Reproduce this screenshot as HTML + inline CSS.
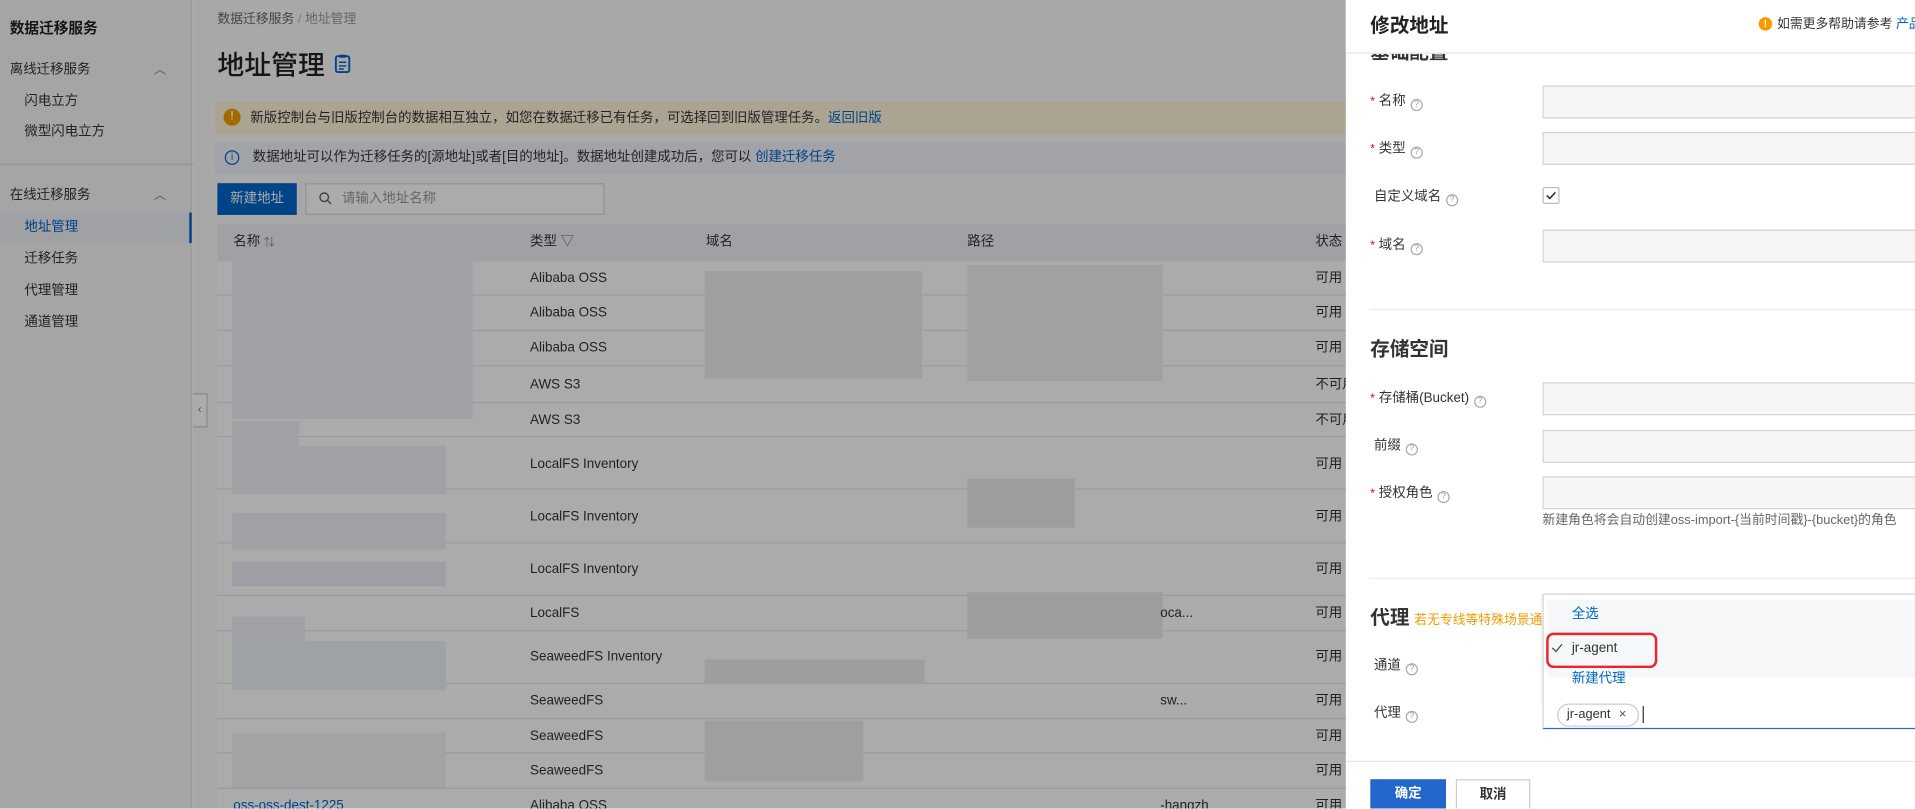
<!DOCTYPE html>
<html><head><meta charset="utf-8"><style>
*{box-sizing:border-box;margin:0;padding:0}
html,body{width:1915px;height:809px;overflow:hidden;background:#fff}
body{font-family:"Liberation Sans","Noto Sans CJK SC",sans-serif;color:#333}
#s{position:absolute;left:0;top:0;width:1568px;height:662px;transform:scale(1.2213);transform-origin:0 0;overflow:hidden}
.a{position:absolute;white-space:nowrap;line-height:14px}
.side{left:0;top:0;width:157px;height:662px;background:#f7f7f8;border-right:1px solid #e3e3e3}
.main{left:158px;top:0;width:1000px;height:662px;background:#fbfbfb}
.row{position:absolute;left:178px;width:940px;border-bottom:1px solid #e6e6e6;background:#fff}
.t{font-size:11px;color:#333}
.bl{background:#e6ebf3;position:absolute}
.gr{background:#eeeeee;position:absolute}
.mask{left:0;top:0;width:1102px;height:662px;background:rgba(0,0,0,0.33)}
.dr{left:1102px;top:0;width:466px;height:662px;background:#fff}
.lab{font-size:11px;color:#333}
.star{color:#e00;font-size:10px}
.q{display:inline-block;width:10px;height:10px;border:1px solid #aaa;border-radius:50%;font-size:7px;line-height:8px;text-align:center;color:#999;margin-left:4px;vertical-align:-1px}
.inp{position:absolute;left:1263px;width:310px;height:27px;background:#f6f6f7;border:1px solid #d4d4d6}
</style></head><body><div id="s">
<div class="a side"></div>
<div class="a" style="left:8px;top:16px;font-size:12px;font-weight:bold;color:#222">数据迁移服务</div>
<div class="a t" style="left:8px;top:50px">离线迁移服务</div>
<div class="a" style="left:126px;top:51px;font-size:10px;color:#888">︿</div>
<div class="a t" style="left:20px;top:76px">闪电立方</div>
<div class="a t" style="left:20px;top:101px">微型闪电立方</div>
<div class="a" style="left:0;top:134px;width:180px;border-top:1px solid #ddd"></div>
<div class="a t" style="left:8px;top:153px">在线迁移服务</div>
<div class="a" style="left:126px;top:154px;font-size:10px;color:#888">︿</div>
<div class="a" style="left:0;top:174px;width:157px;height:25px;background:#edf0f5;border-right:2px solid #0064c8"></div>
<div class="a t" style="left:20px;top:179px;color:#0064c8">地址管理</div>
<div class="a t" style="left:20px;top:205px">迁移任务</div>
<div class="a t" style="left:20px;top:231px">代理管理</div>
<div class="a t" style="left:20px;top:257px">通道管理</div>

<div class="a main"></div>
<div class="a" style="left:178px;top:9px;font-size:10.5px;color:#666">数据迁移服务 <span style="color:#bbb">/</span> <span style="color:#999">地址管理</span></div>
<div class="a" style="left:178px;top:42px;font-size:22px;line-height:24px;font-weight:500;color:#222">地址管理</div>
<svg class="a" style="left:274px;top:44px" width="13" height="16" viewBox="0 0 13 16"><rect x="1" y="2" width="11" height="13" rx="1.5" fill="none" stroke="#0064c8" stroke-width="1.5"/><rect x="4" y="0.8" width="5" height="2.5" fill="#0064c8"/><path d="M3.5 7h6M3.5 10h6M3.5 12.5h4" stroke="#0064c8" stroke-width="1.2"/></svg>
<div class="a" style="left:176px;top:83px;width:940px;height:27px;background:#fff5dc"></div>
<div class="a" style="left:183px;top:89px;width:14px;height:14px;border-radius:50%;background:#f0a000;color:#fff;font-size:10px;text-align:center;line-height:14px;font-weight:bold">!</div>
<div class="a t" style="left:205px;top:90px">新版控制台与旧版控制台的数据相互独立，如您在数据迁移已有任务，可选择回到旧版管理任务。<span style="color:#0064c8">返回旧版</span></div>
<div class="a" style="left:176px;top:117px;width:940px;height:26px;background:#f0f4fb"></div>
<div class="a" style="left:184px;top:123px;width:12px;height:12px;border-radius:50%;border:1px solid #0064c8;color:#0064c8;font-size:8px;text-align:center;line-height:10px">i</div>
<div class="a t" style="left:207px;top:122px">数据地址可以作为迁移任务的[源地址]或者[目的地址]。数据地址创建成功后，您可以 <span style="color:#0064c8">创建迁移任务</span></div>
<div class="a" style="left:178px;top:150px;width:65px;height:26px;background:#0064c8;color:#fff;font-size:11px;text-align:center;line-height:26px">新建地址</div>
<div class="a" style="left:250px;top:150px;width:245px;height:26px;border:1px solid #d8d8d8;background:#fff"></div>
<svg class="a" style="left:261px;top:157px" width="11" height="11" viewBox="0 0 11 11"><circle cx="4.5" cy="4.5" r="3.5" fill="none" stroke="#666" stroke-width="1.2"/><path d="M7 7l3 3" stroke="#666" stroke-width="1.2"/></svg>
<div class="a" style="left:280px;top:156px;font-size:11px;color:#999">请输入地址名称</div>
<div class="a" style="left:178px;top:183px;width:940px;height:31px;background:#eff1f6"></div>
<div class="a t" style="left:191px;top:191px">名称 <span style="color:#888;font-size:9px">⇅</span></div>
<div class="a t" style="left:434px;top:191px">类型 <span style="color:#666">▽</span></div>
<div class="a t" style="left:578px;top:191px">域名</div>
<div class="a t" style="left:792px;top:191px">路径</div>
<div class="a t" style="left:1077px;top:191px">状态</div>

<div class="row" style="top:214px;height:28px"></div>
<div class="row" style="top:242px;height:29px"></div>
<div class="row" style="top:271px;height:29px"></div>
<div class="row" style="top:300px;height:30px"></div>
<div class="row" style="top:330px;height:28px"></div>
<div class="row" style="top:358px;height:43px"></div>
<div class="row" style="top:401px;height:44px"></div>
<div class="row" style="top:445px;height:43px"></div>
<div class="row" style="top:488px;height:29px"></div>
<div class="row" style="top:517px;height:43px"></div>
<div class="row" style="top:560px;height:29px"></div>
<div class="row" style="top:589px;height:28px"></div>
<div class="row" style="top:617px;height:29px"></div>
<div class="row" style="top:646px;height:29px"></div>

<div class="bl" style="left:190px;top:213px;width:197px;height:130px;background:#f0f2f7"></div>
<div class="bl" style="left:190px;top:345px;width:55px;height:20px;background:#eef1f6"></div>
<div class="bl" style="left:190px;top:365px;width:175px;height:40px;background:#eef1f6"></div>
<div class="bl" style="left:190px;top:420px;width:175px;height:30px;background:#eef1f6"></div>
<div class="bl" style="left:190px;top:460px;width:175px;height:20px;background:#eaeef5"></div>
<div class="bl" style="left:190px;top:505px;width:60px;height:20px;background:#eef1f6"></div>
<div class="bl" style="left:190px;top:525px;width:175px;height:40px;background:#ecf0f6"></div>
<div class="bl" style="left:190px;top:600px;width:175px;height:45px;background:#f1f3f7"></div>
<div class="gr" style="left:577px;top:222px;width:178px;height:88px;background:#ededed"></div>
<div class="gr" style="left:792px;top:217px;width:160px;height:95px;background:#eff0f2"></div>
<div class="gr" style="left:792px;top:392px;width:88px;height:40px;background:#ebebeb"></div>
<div class="gr" style="left:792px;top:485px;width:160px;height:38px;background:#ebebeb"></div>
<div class="gr" style="left:577px;top:540px;width:180px;height:20px;background:#ececec"></div>
<div class="gr" style="left:577px;top:590px;width:130px;height:50px;background:#eeeeee"></div>

<div class="a t" style="left:434px;top:221px">Alibaba OSS</div>
<div class="a t" style="left:434px;top:249px">Alibaba OSS</div>
<div class="a t" style="left:434px;top:278px">Alibaba OSS</div>
<div class="a t" style="left:434px;top:308px">AWS S3</div>
<div class="a t" style="left:434px;top:337px">AWS S3</div>
<div class="a t" style="left:434px;top:373px">LocalFS Inventory</div>
<div class="a t" style="left:434px;top:416px">LocalFS Inventory</div>
<div class="a t" style="left:434px;top:459px">LocalFS Inventory</div>
<div class="a t" style="left:434px;top:495px">LocalFS</div>
<div class="a t" style="left:434px;top:531px">SeaweedFS Inventory</div>
<div class="a t" style="left:434px;top:567px">SeaweedFS</div>
<div class="a t" style="left:434px;top:596px">SeaweedFS</div>
<div class="a t" style="left:434px;top:624px">SeaweedFS</div>
<div class="a t" style="left:434px;top:653px">Alibaba OSS</div>
<div class="a t" style="left:191px;top:653px;color:#0064c8">oss-oss-dest-1225</div>
<div class="a t" style="left:950px;top:495px">oca...</div>
<div class="a t" style="left:950px;top:567px">sw...</div>
<div class="a t" style="left:950px;top:653px">-hangzh</div>
<div class="a t" style="left:1077px;top:221px">可用</div>
<div class="a t" style="left:1077px;top:249px">可用</div>
<div class="a t" style="left:1077px;top:278px">可用</div>
<div class="a t" style="left:1077px;top:308px">不可用</div>
<div class="a t" style="left:1077px;top:337px">不可用</div>
<div class="a t" style="left:1077px;top:373px">可用</div>
<div class="a t" style="left:1077px;top:416px">可用</div>
<div class="a t" style="left:1077px;top:459px">可用</div>
<div class="a t" style="left:1077px;top:495px">可用</div>
<div class="a t" style="left:1077px;top:531px">可用</div>
<div class="a t" style="left:1077px;top:567px">可用</div>
<div class="a t" style="left:1077px;top:596px">可用</div>
<div class="a t" style="left:1077px;top:624px">可用</div>
<div class="a t" style="left:1077px;top:653px">可用</div>
<div class="a" style="left:158px;top:322px;width:12px;height:28px;background:#fff;border:1px solid #ccc;border-left:none;font-size:10px;color:#888;text-align:center;line-height:26px">‹</div>

<div class="a mask"></div>

<div class="a dr"></div>
<div class="a" style="left:1122px;top:44px;font-size:16px;font-weight:bold;color:#333;line-height:20px;height:10px;overflow:hidden"><span style="position:relative;top:-10px">基础配置</span></div>
<div class="a" style="left:1102px;top:0;width:466px;height:44px;background:#fff;border-bottom:1px solid #e5e5e5"></div>
<div class="a" style="left:1122px;top:12px;font-size:16px;line-height:20px;font-weight:bold;color:#222">修改地址</div>
<div class="a" style="left:1440px;top:14px;width:11px;height:11px;border-radius:50%;background:#f59a00;color:#fff;font-size:8px;text-align:center;line-height:11px;font-weight:bold">!</div>
<div class="a" style="left:1455px;top:13px;font-size:10.5px;color:#333">如需更多帮助请参考 <span style="color:#0064c8">产品手册</span></div>

<div class="a lab" style="left:1122px;top:76px"><span class="star">*</span> 名称<span class="q">?</span></div>
<div class="inp" style="top:70px"></div>
<div class="a lab" style="left:1122px;top:115px"><span class="star">*</span> 类型<span class="q">?</span></div>
<div class="inp" style="top:108px"></div>
<div class="a lab" style="left:1125px;top:154px">自定义域名<span class="q">?</span></div>
<svg class="a" style="left:1263px;top:153px" width="14" height="14" viewBox="0 0 14 14"><rect x="0.5" y="0.5" width="13" height="13" rx="1.5" fill="#fff" stroke="#bbb"/><path d="M3.5 7l2.5 2.5 4.5-5" fill="none" stroke="#333" stroke-width="1.3"/></svg>
<div class="a lab" style="left:1122px;top:194px"><span class="star">*</span> 域名<span class="q">?</span></div>
<div class="inp" style="top:188px"></div>
<div class="a" style="left:1122px;top:253px;width:446px;border-top:1px solid #e8e8e8"></div>
<div class="a" style="left:1122px;top:277px;font-size:16px;line-height:20px;font-weight:bold;color:#333">存储空间</div>
<div class="a lab" style="left:1122px;top:319px"><span class="star">*</span> 存储桶(Bucket)<span class="q">?</span></div>
<div class="inp" style="top:313px"></div>
<div class="a lab" style="left:1125px;top:358px">前缀<span class="q">?</span></div>
<div class="inp" style="top:352px"></div>
<div class="a lab" style="left:1122px;top:397px"><span class="star">*</span> 授权角色<span class="q">?</span></div>
<div class="inp" style="top:390px"></div>
<div class="a" style="left:1263px;top:419px;font-size:10.5px;color:#666">新建角色将会自动创建oss-import-{当前时间戳}-{bucket}的角色</div>
<div class="a" style="left:1122px;top:473px;width:446px;border-top:1px solid #e8e8e8"></div>
<div class="a" style="left:1122px;top:497px;font-size:16px;line-height:20px;font-weight:bold;color:#333">代理</div>
<div class="a" style="left:1158px;top:501px;font-size:10.5px;color:#f59a00;width:105px;overflow:hidden">若无专线等特殊场景通常</div>
<div class="a lab" style="left:1125px;top:538px">通道<span class="q">?</span></div>
<div class="a lab" style="left:1125px;top:577px">代理<span class="q">?</span></div>

<div class="a" style="left:1263px;top:486px;width:310px;height:89px;background:#fff;border:1px solid #d4d4d6;box-shadow:0 2px 4px rgba(0,0,0,.1)"></div>
<div class="a" style="left:1267px;top:491px;width:306px;height:64px;background:#f6f7f9"></div>
<div class="a" style="left:1287px;top:496px;font-size:11px;color:#0064c8">全选</div>
<svg class="a" style="left:1270px;top:526px" width="10" height="9" viewBox="0 0 10 9"><path d="M1 4.5l3 3 5-6" fill="none" stroke="#555" stroke-width="1.1"/></svg>
<div class="a" style="left:1287px;top:524px;font-size:11px;color:#333">jr-agent</div>
<div class="a" style="left:1266px;top:518px;width:91px;height:29px;border:2px solid #e8262b;border-radius:6px"></div>
<div class="a" style="left:1287px;top:549px;font-size:11px;color:#0064c8">新建代理</div>
<div class="a" style="left:1263px;top:574px;width:310px;height:23px;background:#fff;border:1px solid #d4d4d6;border-bottom:1px solid #2a66cc;border-top:none"></div>
<div class="a" style="left:1275px;top:576px;width:67px;height:19px;border:1px solid #ccc;border-radius:10px;font-size:10.5px;line-height:17px;padding-left:7px;color:#333">jr-agent <span style="margin-left:4px;color:#555">×</span></div>
<div class="a" style="left:1345px;top:578px;width:1px;height:14px;background:#333"></div>
<div class="a" style="left:1102px;top:623px;width:466px;border-top:1px solid #e5e5e5"></div>
<div class="a" style="left:1122px;top:638px;width:62px;height:26px;background:#2367cc;color:#fff;font-size:11px;font-weight:bold;text-align:center;line-height:24px">确定</div>
<div class="a" style="left:1192px;top:638px;width:61px;height:26px;background:#fff;border:1px solid #ccc;color:#333;font-size:11px;font-weight:bold;text-align:center;line-height:24px">取消</div>
</div></body></html>
